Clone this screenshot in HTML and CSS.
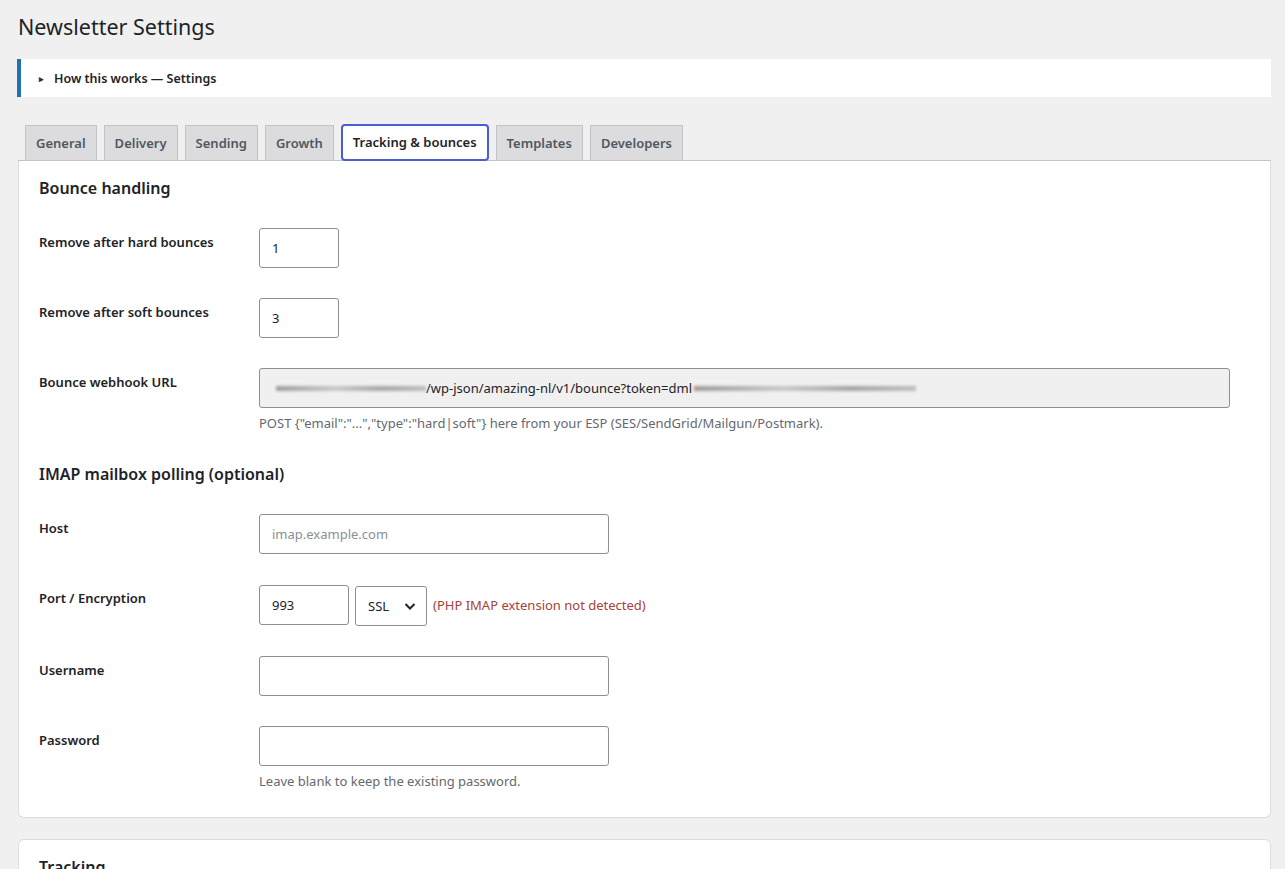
FILE: index.html
```html
<!DOCTYPE html>
<html lang="en">
<head>
    <meta charset="UTF-8">
    <meta name="viewport" content="width=device-width, initial-scale=1.0">
    <title>Newsletter Settings</title>
    <link rel="stylesheet" href="styles.css">
</head>
<body>
    <div class="wrap">
        <h1>Newsletter Settings</h1>

        <div class="notice">
            <span class="arrow">&#9656;</span>
            <span>How this works — Settings</span>
        </div>

        <nav class="tabs">
            <a class="tab" href="#">General</a>
            <a class="tab" href="#">Delivery</a>
            <a class="tab" href="#">Sending</a>
            <a class="tab" href="#">Growth</a>
            <a class="tab active" href="#">Tracking &amp; bounces</a>
            <a class="tab" href="#">Templates</a>
            <a class="tab" href="#">Developers</a>
        </nav>

        <div class="card first">
            <h2>Bounce handling</h2>
            <table class="form-table">
                <tr>
                    <th>Remove after hard bounces</th>
                    <td><input type="text" class="small" value="1"></td>
                </tr>
                <tr>
                    <th>Remove after soft bounces</th>
                    <td><input type="text" class="small" value="3"></td>
                </tr>
                <tr>
                    <th>Bounce webhook URL</th>
                    <td>
                        <div class="url-field">
                            <span class="smear smear-left"></span>
                            <span class="url-text">/wp-json/amazing-nl/v1/bounce?token=dml</span>
                            <span class="smear smear-right"></span>
                        </div>
                        <p class="description">POST {"email":"...","type":"hard|soft"} here from your ESP (SES/SendGrid/Mailgun/Postmark).</p>
                    </td>
                </tr>
            </table>

            <h2>IMAP mailbox polling (optional)</h2>
            <table class="form-table">
                <tr>
                    <th>Host</th>
                    <td><input type="text" class="regular" placeholder="imap.example.com"></td>
                </tr>
                <tr>
                    <th>Port / Encryption</th>
                    <td>
                        <div class="inline-fields">
                            <input type="text" class="port" value="993">
                            <div class="select">
                                <span>SSL</span>
                                <svg width="16" height="16" viewBox="0 0 16 16"><path d="M3.5 6 L8 10.5 L12.5 6" fill="none" stroke="#1d2327" stroke-width="2"/></svg>
                            </div>
                            <span class="error">(PHP IMAP extension not detected)</span>
                        </div>
                    </td>
                </tr>
                <tr>
                    <th>Username</th>
                    <td><input type="text" class="regular"></td>
                </tr>
                <tr>
                    <th>Password</th>
                    <td>
                        <input type="password" class="regular">
                        <p class="description">Leave blank to keep the existing password.</p>
                    </td>
                </tr>
            </table>
        </div>

        <div class="card">
            <h2>Tracking</h2>
        </div>
    </div>
</body>
</html>
```
FILE: styles.css
```css
body {
    margin: 0;
    background: #f0f0f1;
    color: #1d2327;
    font-family: "Noto Sans", "Open Sans", sans-serif;
    font-size: 13px;
}

.wrap {
    padding: 12px 14px 0 18px;
}

h1 {
    margin: 0;
    font-size: 21.5px;
    font-weight: 400;
    line-height: 30px;
}

.notice {
    display: flex;
    align-items: center;
    height: 38px;
    margin: 17px 0 0 -1px;
    padding-left: 18px;
    background: #fff;
    border-left: 4px solid #2271b1;
    font-weight: 600;
    font-size: 12.5px;
}

.notice .arrow {
    font-size: 9px;
    margin-right: 10px;
    color: #2c3338;
}

.tabs {
    display: flex;
    align-items: flex-end;
    gap: 7px;
    margin-top: 27px;
    padding-left: 7px;
    border-bottom: 1px solid #c3c4c7;
}

.tab {
    padding: 5px 10px;
    line-height: 24px;
    font-size: 13px;
    font-weight: 600;
    color: #50575e;
    text-decoration: none;
    background: #dcdcde;
    border: 1px solid #c3c4c7;
    border-bottom: 0;
}

.tab.active {
    padding: 4px 10px 5px;
    margin-bottom: -1px;
    background: #fff;
    color: #1d2327;
    border: 2px solid #4a5ed4;
    border-radius: 4px;
}

.card {
    display: flow-root;
    background: #fff;
    border: 1px solid #dcdcde;
    border-radius: 6px;
    padding: 0 20px 12px;
    margin-bottom: 21px;
}

.card.first {
    border-top: 0;
    border-radius: 0 0 6px 6px;
}

h2 {
    margin: 16px 0 14px;
    font-size: 16px;
    font-weight: 600;
    line-height: 22px;
}

.form-table {
    width: 100%;
    border-collapse: collapse;
}

.form-table th {
    width: 200px;
    padding: 20px 10px 20px 0;
    text-align: left;
    vertical-align: top;
    font-size: 13px;
    font-weight: 600;
    line-height: 18px;
}

.form-table td {
    padding: 15px 10px;
    vertical-align: top;
}

input {
    box-sizing: border-box;
    height: 40px;
    padding: 0 12px;
    border: 1px solid #8c8f94;
    border-radius: 3px;
    font-family: inherit;
    font-size: 13px;
    color: #1d2327;
    background: #fff;
}

input::placeholder {
    color: #8c8f94;
}

.small {
    width: 80px;
}

.port {
    width: 90px;
}

.regular {
    width: 350px;
}

.url-field {
    display: flex;
    align-items: center;
    box-sizing: border-box;
    width: 99%;
    height: 40px;
    padding-left: 16px;
    background: #f0f0f1;
    border: 1px solid #8c8f94;
    border-radius: 3px;
    font-size: 13px;
    overflow: hidden;
}

.smear {
    height: 5px;
    background: linear-gradient(90deg, #9c9c9c, #c8c8c8 40%, #a5a5a5 70%, #bdbdbd);
    filter: blur(1.5px);
}

.smear-left {
    width: 150px;
}

.smear-right {
    width: 220px;
    margin-left: 2px;
    border-left: 2px solid #d2834a;
}

.url-text {
    white-space: nowrap;
}

.description {
    margin: 6px 0 0;
    color: #646970;
    font-size: 13px;
    line-height: 18px;
}

.inline-fields {
    display: flex;
    align-items: center;
    gap: 6px;
}

.select {
    display: flex;
    align-items: center;
    justify-content: space-between;
    box-sizing: border-box;
    width: 72px;
    height: 40px;
    padding: 0 8px 0 12px;
    border: 1px solid #8c8f94;
    border-radius: 3px;
    margin-top: 2px;
}

.error {
    color: #a63f3d;
    font-size: 13px;
}
```
